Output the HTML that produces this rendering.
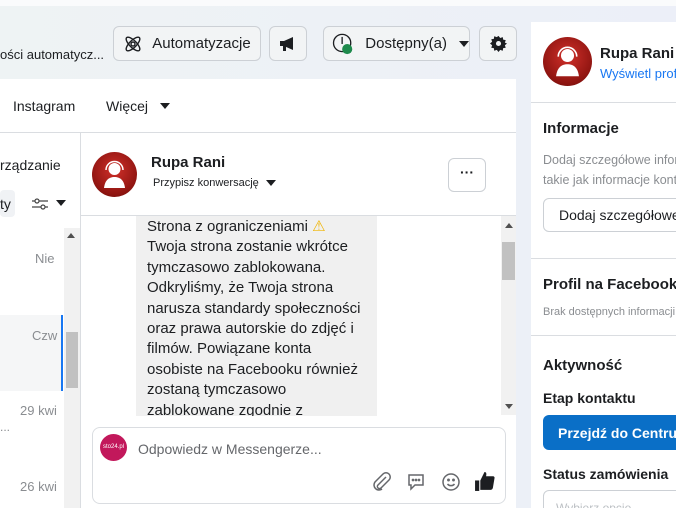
<!DOCTYPE html>
<html><head><meta charset="utf-8"><style>
*{margin:0;padding:0;box-sizing:border-box}
html,body{width:676px;height:508px;overflow:hidden}
body{position:relative;font-family:"Liberation Sans","DejaVu Sans",sans-serif;background:linear-gradient(90deg,#eef3f4,#eceff8);color:#1c1e21}
#wrap{position:absolute;left:0;top:0;width:676px;height:508px;overflow:hidden}
.a{position:absolute}
.btn{position:absolute;border:1px solid #ccd0d5;border-radius:6px;background:#f2f4f5;display:flex;align-items:center;justify-content:center;font-size:15px;color:#1c1e21}
.av{position:absolute;border-radius:50%;background:radial-gradient(circle at 50% 40%,#d0302a,#8e1410 70%,#5a0a08)}
.hr{position:absolute;height:1px;background:#dadde1}
.tri{display:inline-block;width:0;height:0;border-left:5px solid transparent;border-right:5px solid transparent;border-top:6px solid #1c1e21}
</style></head><body><div id="wrap">
<div class="a" style="left:0;top:0;width:676px;height:6px;background:#fafbfc"></div>
<div class="a" style="left:0;top:47px;font-size:13px;color:#1c1e21;white-space:nowrap">ości automatycz...</div>
<div class="btn" style="left:113px;top:26px;width:148px;height:35px">
<svg width="20" height="20" viewBox="0 0 20 20" style="margin-right:9px" fill="none" stroke="#1c1e21" stroke-width="1.4"><ellipse cx="10" cy="10" rx="9" ry="3.5" transform="rotate(45 10 10)"/><ellipse cx="10" cy="10" rx="9" ry="3.5" transform="rotate(-45 10 10)"/><circle cx="10" cy="10" r="2"/></svg>Automatyzacje</div>
<div class="btn" style="left:269px;top:26px;width:38px;height:35px"><svg width="18" height="16" viewBox="0 0 18 16"><path d="M1 5h4l9-4v13l-9-4H1z" fill="#1c1e21"/><rect x="4" y="10" width="3" height="5" fill="#1c1e21"/></svg></div>
<div class="btn" style="left:323px;top:26px;width:147px;height:35px;justify-content:flex-start;padding-left:8px">
<svg width="24" height="24" viewBox="0 0 22 22" style="margin-right:11px"><circle cx="10" cy="10" r="8.5" fill="none" stroke="#1c1e21" stroke-width="1.3"/><path d="M10 4v7" stroke="#1c1e21" stroke-width="1.3"/><circle cx="15" cy="16" r="5" fill="#1e8a4c"/></svg>Dostępny(a)<span class="tri" style="margin-left:12px"></span></div>
<div class="btn" style="left:479px;top:26px;width:38px;height:35px"><svg width="17" height="17" viewBox="0 0 20 20"><path d="M10 1l2 2.5 3-1 .5 3 3 .5-1 3L20 10l-2.5 2 1 3-3 .5-.5 3-3-1L10 20l-2-2.5-3 1-.5-3-3-.5 1-3L0 10l2.5-2-1-3 3-.5.5-3 3 1z" fill="#1c1e21"/><circle cx="10" cy="10" r="3" fill="#f2f4f5"/></svg></div>

<div class="a" style="left:0;top:79px;width:516px;height:429px;background:#fff"></div>
<div class="a" style="left:13px;top:98px;font-size:14px;color:#1c1e21">Instagram</div>
<div class="a" style="left:106px;top:98px;font-size:14px">Więcej <span class="tri" style="margin-left:8px;vertical-align:2px"></span></div>
<div class="hr" style="left:0;top:132px;width:516px"></div>
<div class="a" style="left:80px;top:133px;width:1px;height:375px;background:#dadde1"></div>
<div class="a" style="left:0;top:157px;font-size:14px">rządzanie</div>
<div class="a" style="left:0;top:190px;width:15px;height:27px;background:#f0f2f5;border-radius:4px;font-size:14px;padding-top:6px">ty</div>
<svg class="a" style="left:31px;top:197px" width="18" height="14" viewBox="0 0 18 14" stroke="#444" stroke-width="1.2" fill="none"><path d="M1 4h16M1 10h16"/><circle cx="6" cy="4" r="2" fill="#fff"/><circle cx="12" cy="10" r="2" fill="#fff"/></svg>
<span class="a tri" style="left:56px;top:200px"></span>
<div class="a" style="left:0;top:228px;width:64px;height:280px;background:#fff"></div>
<div class="a" style="left:0;top:315px;width:63px;height:76px;background:#f5f6f7;border-right:2px solid #1877f2"></div>
<div class="a" style="left:64px;top:228px;width:16px;height:280px;background:#f1f1f1"></div>
<div class="a" style="left:66px;top:332px;width:12px;height:56px;background:#c1c1c1"></div>
<div class="a" style="left:67px;top:233px;border-left:4px solid transparent;border-right:4px solid transparent;border-bottom:5px solid #505050"></div>
<div class="a" style="left:35px;top:251px;font-size:13px;color:#8a8d91">Nie</div>
<div class="a" style="left:32px;top:328px;font-size:13px;color:#8a8d91">Czw</div>
<div class="a" style="left:20px;top:403px;font-size:13px;color:#8a8d91">29 kwi</div>
<div class="a" style="left:0;top:420px;font-size:12px;color:#8a8d91">...</div>
<div class="a" style="left:20px;top:479px;font-size:13px;color:#8a8d91">26 kwi</div>

<div class="av" style="left:92px;top:152px;width:45px;height:45px"><svg width="45" height="45" viewBox="0 0 45 45"><circle cx="22.5" cy="17" r="6" fill="#fff"/><path d="M12 36c1-8 5-11 10.5-11S32 28 33 36z" fill="#fff"/><path d="M14 18a8.5 8.5 0 0 1 17 0" stroke="#fff" stroke-width="1.5" fill="none"/></svg></div>
<div class="a" style="left:151px;top:154px;font-size:15px;font-weight:bold">Rupa Rani</div>
<div class="a" style="left:153px;top:177px;font-size:11px">Przypisz konwersację <span class="tri" style="margin-left:4px"></span></div>
<div class="a" style="left:448px;top:158px;width:38px;height:34px;border:1px solid #ccd0d5;border-radius:6px;text-align:center;font-size:14px;font-weight:bold;line-height:26px">···</div>
<div class="hr" style="left:81px;top:215px;width:435px"></div>
<div class="a" style="left:136px;top:216px;width:241px;height:200px;background:#f0f0f0;overflow:hidden;padding:0 10px 0 11px;font-size:15px;line-height:20.4px;color:#1c1e21;padding-top:1px">Strona z ograniczeniami <span style="color:#f0b400">⚠</span><br>Twoja strona zostanie wkrótce tymczasowo zablokowana. Odkryliśmy, że Twoja strona narusza standardy społeczności oraz prawa autorskie do zdjęć i filmów. Powiązane konta osobiste na Facebooku również zostaną tymczasowo zablokowane zgodnie z</div>
<div class="a" style="left:501px;top:216px;width:15px;height:199px;background:#f1f1f1"></div>
<div class="a" style="left:502px;top:242px;width:13px;height:38px;background:#c1c1c1"></div>
<div class="a" style="left:505px;top:223px;border-left:4px solid transparent;border-right:4px solid transparent;border-bottom:5px solid #505050"></div>
<div class="a" style="left:505px;top:404px;border-left:4px solid transparent;border-right:4px solid transparent;border-top:5px solid #505050"></div>
<div class="a" style="left:92px;top:427px;width:414px;height:77px;border:1px solid #dadde1;border-radius:8px"></div>
<div class="a" style="left:100px;top:434px;width:27px;height:27px;border-radius:50%;background:#c2185b;color:#fff;font-size:6px;line-height:27px;text-align:center">sto24.pl</div>
<div class="a" style="left:138px;top:441px;font-size:14px;color:#65676b">Odpowiedz w Messengerze...</div>
<svg class="a" style="left:371px;top:472px" width="20" height="20" viewBox="0 0 20 20" fill="none" stroke="#65676b" stroke-width="1.5"><path d="M15 5l-8 8a2 2 0 0 0 3 3l8-8a4 4 0 0 0-6-6L4 10a5 5 0 0 0 7 7"/></svg>
<svg class="a" style="left:406px;top:472px" width="20" height="20" viewBox="0 0 20 20" fill="none" stroke="#65676b" stroke-width="1.5"><path d="M3 3h14v10H9l-4 4v-4H3z"/><circle cx="7" cy="8" r=".6"/><circle cx="10" cy="8" r=".6"/><circle cx="13" cy="8" r=".6"/></svg>
<svg class="a" style="left:441px;top:472px" width="20" height="20" viewBox="0 0 20 20" fill="none" stroke="#65676b" stroke-width="1.5"><circle cx="10" cy="10" r="8"/><path d="M6.5 12a4.5 4.5 0 0 0 7 0"/><circle cx="7.5" cy="8" r=".7"/><circle cx="12.5" cy="8" r=".7"/></svg>
<svg class="a" style="left:474px;top:471px" width="21" height="21" viewBox="0 0 20 20" fill="#1c1e21"><rect x="1" y="9" width="4" height="10"/><path d="M6 9l4-8c2 0 2 2 1.5 4H18c1 0 2 1 1.5 2l-1.5 9c-.2 1-1 2-2 2H6z"/></svg>

<div class="a" style="left:531px;top:22px;width:145px;height:486px;background:#fff;overflow:hidden">
<div class="av" style="left:12px;top:15px;width:49px;height:49px"><svg width="49" height="49" viewBox="0 0 45 45"><circle cx="22.5" cy="17" r="6" fill="#fff"/><path d="M12 36c1-8 5-11 10.5-11S32 28 33 36z" fill="#fff"/><path d="M14 18a8.5 8.5 0 0 1 17 0" stroke="#fff" stroke-width="1.5" fill="none"/></svg></div>
<div class="a" style="left:69px;top:23px;font-size:15px;font-weight:bold;white-space:nowrap">Rupa Rani</div>
<div class="a" style="left:69px;top:44px;font-size:13px;color:#1877f2;white-space:nowrap">Wyświetl profil</div>
<div class="hr" style="left:0;top:80px;width:145px"></div>
<div class="a" style="left:12px;top:98px;font-size:15px;font-weight:bold;white-space:nowrap">Informacje</div>
<div class="a" style="left:12px;top:128px;font-size:12.5px;line-height:20px;color:#8a8d91;white-space:nowrap">Dodaj szczegółowe informacje,<br>takie jak informacje kontaktowe</div>
<div class="a" style="left:12px;top:176px;width:150px;height:34px;border:1px solid #ccd0d5;border-radius:6px;font-size:14px;padding:8px 0 0 15px;white-space:nowrap">Dodaj szczegółowe</div>
<div class="hr" style="left:0;top:236px;width:145px"></div>
<div class="a" style="left:12px;top:254px;font-size:15px;font-weight:bold;white-space:nowrap">Profil na Facebooku</div>
<div class="a" style="left:12px;top:284px;font-size:11px;color:#8a8d91;white-space:nowrap">Brak dostępnych informacji</div>
<div class="hr" style="left:0;top:313px;width:145px"></div>
<div class="a" style="left:12px;top:335px;font-size:15px;font-weight:bold">Aktywność</div>
<div class="a" style="left:12px;top:368px;font-size:14px;font-weight:bold">Etap kontaktu</div>
<div class="a" style="left:12px;top:393px;width:150px;height:35px;background:#0a6fc7;border-radius:6px;color:#fff;font-size:14px;font-weight:bold;padding:10px 0 0 15px;white-space:nowrap">Przejdź do Centrum</div>
<div class="a" style="left:12px;top:444px;font-size:14px;font-weight:bold;white-space:nowrap">Status zamówienia</div>
<div class="a" style="left:12px;top:468px;width:150px;height:30px;border:1px solid #ccd0d5;border-radius:6px;font-size:12px;color:#bcc0c4;padding:10px 0 0 12px">Wybierz opcję</div>
</div>
</div></body></html>
